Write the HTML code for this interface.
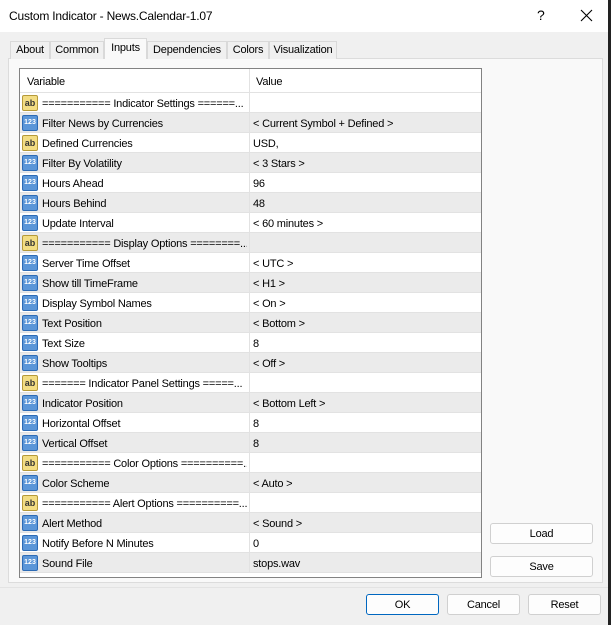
<!DOCTYPE html><html><head><style>
*{box-sizing:border-box;margin:0;padding:0}
body{width:611px;height:625px;background:#f0f0f0;font-family:"Liberation Sans",sans-serif;font-size:11px;letter-spacing:-0.2px;color:#000;position:relative;overflow:hidden}
.a{position:absolute}
.title{left:0;top:0;width:608px;height:32px;background:#fff}
.edge{left:608px;top:0;width:3px;height:625px;background:#222}
.tab{top:41px;height:18px;border:1px solid #d9d9d9;border-bottom:none;background:#f0f0f0;text-align:center;line-height:17px}
.panel{left:8px;top:58px;width:595px;height:525px;background:#f9f9f9;border:1px solid #dcdcdc}
.list{left:19px;top:68px;width:463px;height:510px;background:#fff;border:1px solid #828282;overflow:hidden}
.row{position:absolute;left:0;width:461px;height:20px;line-height:22px;border-bottom:1px solid #e2e2e2}
.row.g{background:#ebebeb}
.row .v{position:absolute;left:22px;width:205px;overflow:hidden;white-space:nowrap}
.row .w{position:absolute;left:233px}
.row .d{position:absolute;left:229px;top:0;width:1px;height:20px;background:#e2e2e2}
.ic{position:absolute;left:2px;top:2px;width:16px;height:16px;border-radius:2px;line-height:14px;text-align:center;font-weight:bold;letter-spacing:0}
.ab{background:#f3dd83;border:1px solid #b59a3a;color:#333;font-size:9px}
.n{background:#5b96d8;border:1px solid #2d6bb5;color:#fff;font-size:7px}
.btn{height:21px;border:1px solid #d0d0d0;border-radius:3px;background:#fdfdfd;text-align:center;line-height:20px}
</style></head><body>
<div class="a title"></div>
<div class="a" style="left:9px;top:9px;font-size:12px">Custom Indicator - News.Calendar-1.07</div>
<div class="a" style="left:537px;top:7px;font-size:14px">?</div>
<svg class="a" style="left:580px;top:9px" width="13" height="13"><path d="M1 1L12 12M12 1L1 12" stroke="#000" stroke-width="1.1"/></svg>
<div class="a edge"></div>
<div class="a panel"></div>
<div class="a tab" style="left:10px;width:40px">About</div>
<div class="a tab" style="left:50px;width:54px">Common</div>
<div class="a tab" style="left:104px;top:38px;height:21px;width:43px;background:#f9f9f9;line-height:18px;z-index:2">Inputs</div>
<div class="a tab" style="left:147px;width:80px">Dependencies</div>
<div class="a tab" style="left:227px;width:42px">Colors</div>
<div class="a tab" style="left:269px;width:68px">Visualization</div>
<div class="a list">
<div class="row" style="top:0;height:24px;line-height:26px"><span class="a" style="left:7px">Variable</span><span class="a" style="left:236px">Value</span><div class="d" style="height:24px"></div></div>
<div id="rows"></div>
</div>
<div class="a btn" style="left:490px;top:523px;width:103px">Load</div>
<div class="a btn" style="left:490px;top:556px;width:103px">Save</div>
<div class="a" style="left:0;top:587px;width:608px;height:1px;background:#e3e3e3"></div>
<div class="a btn" style="left:366px;top:594px;width:73px;border-color:#0067c0">OK</div>
<div class="a btn" style="left:447px;top:594px;width:73px">Cancel</div>
<div class="a btn" style="left:528px;top:594px;width:73px">Reset</div>
<script>
var d=[["a","=========== Indicator Settings ======...",""],["n","Filter News by Currencies","< Current Symbol + Defined >"],["a","Defined Currencies","USD,"],["n","Filter By Volatility","< 3 Stars >"],["n","Hours Ahead","96"],["n","Hours Behind","48"],["n","Update Interval","< 60 minutes >"],["a","=========== Display Options ========...",""],["n","Server Time Offset","< UTC >"],["n","Show till TimeFrame","< H1 >"],["n","Display Symbol Names","< On >"],["n","Text Position","< Bottom >"],["n","Text Size","8"],["n","Show Tooltips","< Off >"],["a","======= Indicator Panel Settings =====...",""],["n","Indicator Position","< Bottom Left >"],["n","Horizontal Offset","8"],["n","Vertical Offset","8"],["a","=========== Color Options ==========...",""],["n","Color Scheme","< Auto >"],["a","=========== Alert Options ==========...",""],["n","Alert Method","< Sound >"],["n","Notify Before N Minutes","0"],["n","Sound File","stops.wav"]];
var h="";d.forEach(function(r,i){h+='<div class="row'+(i%2?' g':'')+'" style="top:'+(24+i*20)+'px"><div class="ic '+(r[0]=="a"?"ab":"n")+'">'+(r[0]=="a"?"ab":"123")+'</div><span class="v">'+r[1]+'</span><div class="d"></div><span class="w">'+r[2]+'</span></div>'});
document.getElementById("rows").outerHTML=h;
</script>
</body></html>
